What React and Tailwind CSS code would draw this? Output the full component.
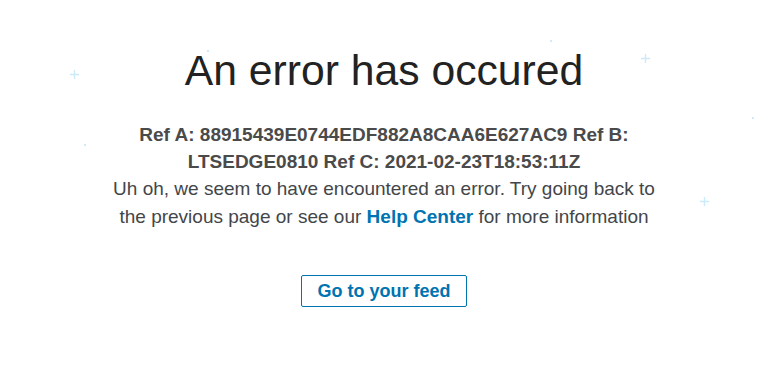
const sparkles = [
  { x: 74, y: 74, type: 'plus' },
  { x: 645, y: 58, type: 'plus' },
  { x: 704, y: 201, type: 'plus' },
  { x: 208, y: 51, type: 'dot' },
  { x: 551, y: 41, type: 'dot' },
  { x: 753, y: 118, type: 'dot' },
  { x: 85, y: 145, type: 'dot' },
];

function Sparkle({ x, y, type }) {
  if (type === 'dot') {
    return (
      <span
        className="absolute w-[2px] h-[2px] bg-[#cfeafc]"
        style={{ left: x - 1, top: y - 1 }}
      />
    );
  }
  return (
    <svg
      className="absolute"
      width="9"
      height="9"
      viewBox="0 0 9 9"
      style={{ left: x - 4, top: y - 4 }}
    >
      <path d="M4.5 0v9M0 4.5h9" stroke="#cdeafb" strokeWidth="1.4" />
    </svg>
  );
}

export default function App() {
  return (
    <div className="relative w-[768px] h-[365px] bg-white overflow-hidden font-['Liberation_Sans',Arial,sans-serif]">
      {sparkles.map((s, i) => (
        <Sparkle key={i} {...s} />
      ))}
      <div className="flex flex-col items-center pt-[46px] text-center">
        <h1 className="text-[42.7px] leading-[48px] font-normal text-[#222]">
          An error has occured
        </h1>
        <div className="mt-[27px] w-[556px] text-[19px] leading-[27px] font-bold text-[#4a4a4a]">
          Ref A: 88915439E0744EDF882A8CAA6E627AC9 Ref B: LTSEDGE0810 Ref C: 2021-02-23T18:53:11Z
        </div>
        <p className="w-[556px] text-[19px] leading-[28px] text-[#434649]">
          Uh oh, we seem to have encountered an error. Try going back to the previous page or see our{' '}
          <a className="font-bold text-[#0073b1]">Help Center</a> for more information
        </p>
        <button className="mt-[44px] h-[32px] px-[15px] border border-[#0073b1] rounded-[2px] text-[18px] leading-[30px] font-bold text-[#0073b1]">
          Go to your feed
        </button>
      </div>
    </div>
  );
}
